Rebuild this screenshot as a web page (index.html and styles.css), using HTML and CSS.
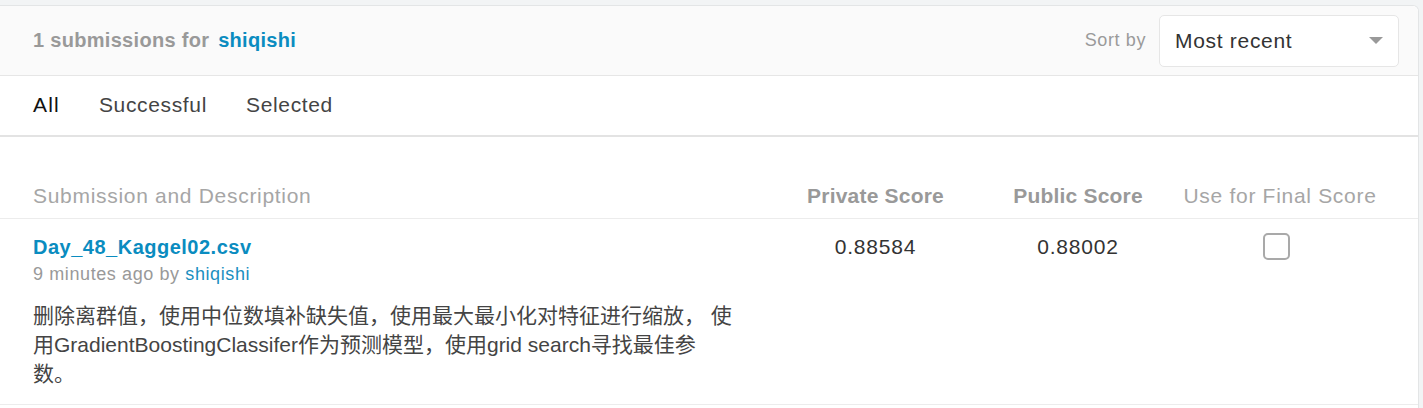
FILE: index.html
```html
<!DOCTYPE html>
<html lang="zh">
<head>
<meta charset="utf-8">
<title>Submissions</title>
<link rel="stylesheet" href="styles.css">
</head>
<body>
<div class="page">
  <div class="card">
    <div class="card-header">
      <div class="title"><span class="count">1 submissions for</span> <a class="user strong">shiqishi</a></div>
      <div class="sort">
        <span class="sort-label">Sort by</span>
        <div class="select">
          <span>Most recent</span>
          <span class="caret"></span>
        </div>
      </div>
    </div>
    <div class="tabs">
      <span class="tab active">All</span>
      <span class="tab">Successful</span>
      <span class="tab">Selected</span>
    </div>
    <div class="table">
      <div class="row head">
        <div class="cell desc-col light">Submission and Description</div>
        <div class="cell num bold-head">Private Score</div>
        <div class="cell num bold-head">Public Score</div>
        <div class="cell num light">Use for Final Score</div>
      </div>
      <div class="row item">
        <div class="cell desc-col">
          <a class="file">Day_48_Kaggel02.csv</a>
          <div class="meta">9 minutes ago by <a class="user">shiqishi</a></div>
          <p class="desc">删除离群值，使用中位数填补缺失值，使用最大最小化对特征进行缩放， 使用GradientBoostingClassifer作为预测模型，使用grid search寻找最佳参数。</p>
        </div>
        <div class="cell num score">0.88584</div>
        <div class="cell num score">0.88002</div>
        <div class="cell num"><span class="checkbox"></span></div>
      </div>
    </div>
  </div>
</div>
</body>
</html>
```

FILE: styles.css
```css
* { box-sizing: border-box; }
html, body {
  margin: 0;
  padding: 0;
  background: #f2f4f5;
  font-family: "Liberation Sans", Arial, "Noto Sans CJK SC", sans-serif;
}
.page {
  padding: 5px 5px 0 0;
  height: 408px;
  overflow: hidden;
}
.card {
  background: #fff;
  border: 1px solid #e3e5e6;
  border-left: none;
  border-top-right-radius: 6px;
  width: 1419px;
  padding-bottom: 40px;
}
.card-header {
  height: 70px;
  background: #fafafa;
  border-bottom: 1px solid #e6e6e6;
  display: flex;
  align-items: center;
  justify-content: space-between;
  padding: 0 19px 0 33px;
  border-top-right-radius: 6px;
}
.title {
  font-size: 20px;
  font-weight: bold;
  color: #999;
  letter-spacing: 0.3px;
}
.user { color: #1b8fbf; text-decoration: none; }
.user.strong { color: #0a8cc0; margin-left: 3px; }
.sort {
  display: flex;
  align-items: center;
  gap: 13px;
}
.sort-label {
  font-size: 18px;
  color: #9a9a9a;
  letter-spacing: 0.6px;
}
.select {
  width: 240px;
  height: 52px;
  background: #fff;
  border: 1px solid #e6e6e6;
  border-radius: 5px;
  display: flex;
  align-items: center;
  justify-content: space-between;
  padding: 0 15px 0 15px;
  font-size: 21px;
  letter-spacing: 0.7px;
  color: #333;
}
.caret {
  width: 0;
  height: 0;
  border-left: 7px solid transparent;
  border-right: 7px solid transparent;
  border-top: 7px solid #999;
}
.tabs {
  height: 61px;
  border-bottom: 2px solid #e3e3e3;
  display: flex;
  align-items: center;
  gap: 39px;
  padding: 0 0 2px 33px;
  font-size: 21px;
  letter-spacing: 0.65px;
  color: #444;
}
.tab.active { color: #111; letter-spacing: 1.2px; }
.table {
  padding-top: 47px;
}
.row {
  display: grid;
  grid-template-columns: 1fr 203px 202px 202px;
  padding: 0 37px 0 33px;
}
.row.head {
  height: 35px;
  border-bottom: 1px solid #ececec;
  align-items: start;
  font-size: 21px;
  line-height: 23px;
}
.light { color: #a6a6a6; letter-spacing: 0.7px; }
.bold-head { color: #999; font-weight: bold; letter-spacing: 0.2px; }
.num { text-align: center; }
.row.item {
  padding-top: 14px;
  padding-bottom: 16px;
  border-bottom: 1px solid #ececec;
}
.file {
  display: block;
  font-size: 20px;
  font-weight: bold;
  color: #0a8cc0;
  line-height: 28px;
  letter-spacing: 0.5px;
}
.meta {
  font-size: 18px;
  color: #999;
  line-height: 26px;
  letter-spacing: 0.6px;
}
.desc {
  margin: 14px 0 0 0;
  width: 702px;
  font-size: 21px;
  line-height: 29px;
  color: #444;
  font-family: "Liberation Sans", "Noto Sans CJK SC", sans-serif;
}
.score {
  font-size: 21px;
  color: #333;
  line-height: 28px;
  letter-spacing: 0.8px;
}
.checkbox {
  display: inline-block;
  width: 27px;
  height: 27px;
  border: 2px solid #a9a9a9;
  border-radius: 5px;
  margin-right: 8px;
}
```
